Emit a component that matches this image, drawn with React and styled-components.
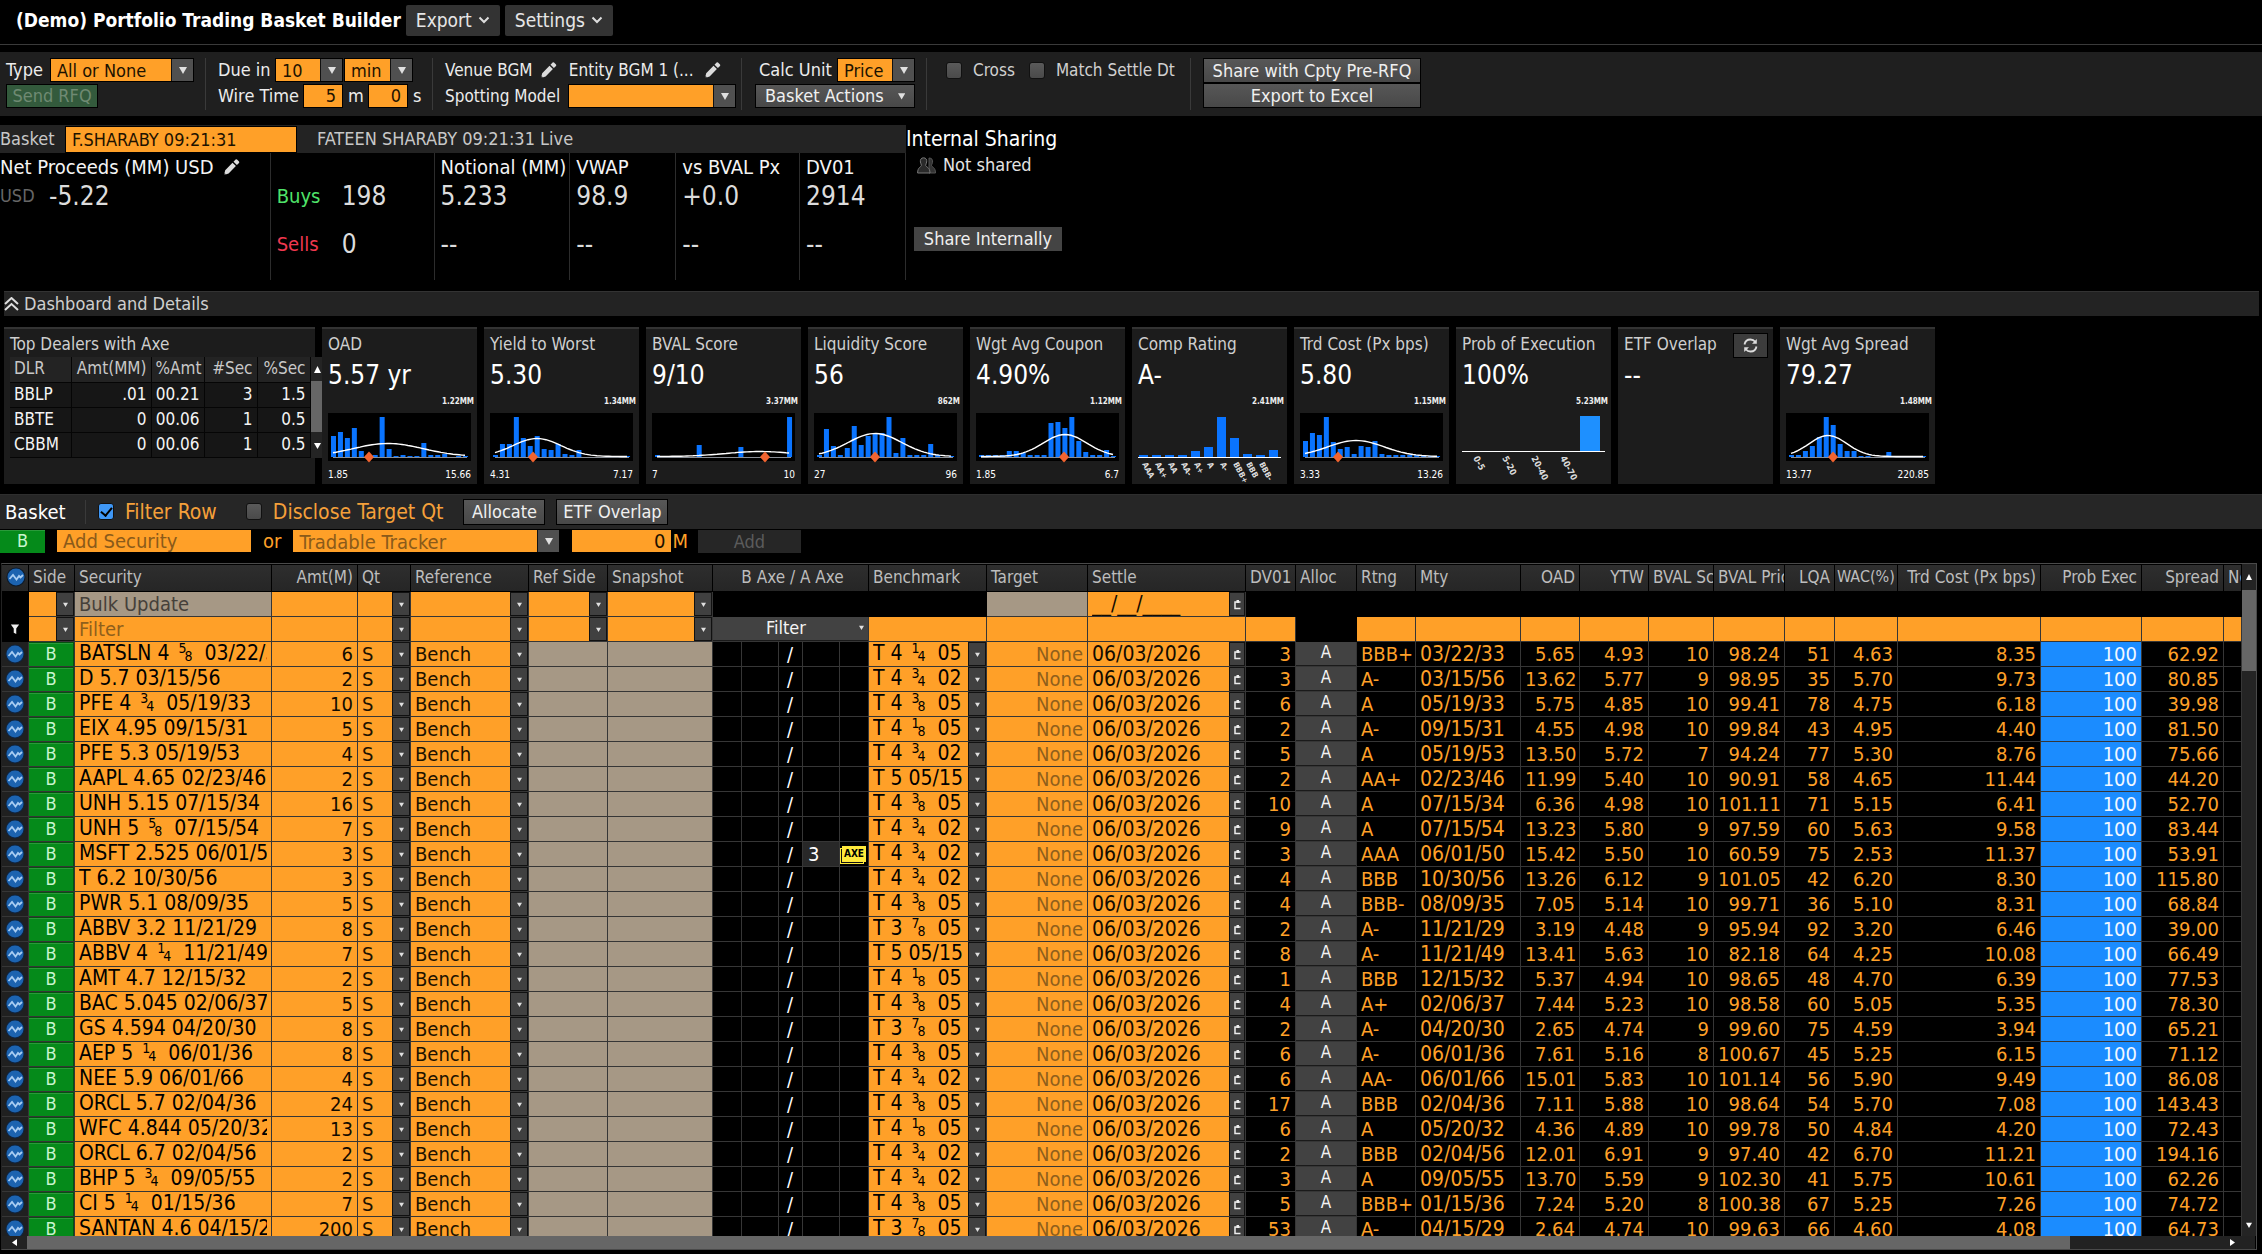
import React from "react";
import styled, { createGlobalStyle, css } from "styled-components";

const orange = "#ffa028";
const tan = "#a69885";
const line = "#363636";

const GlobalStyle = createGlobalStyle`
  * {
    box-sizing: border-box;
  }
  body {
    margin: 0;
    background: #000;
    color: #d8d8d8;
    font-family: "DejaVu Sans Condensed", "Noto Sans", sans-serif;
    font-size: 18px;
    line-height: 24px;
    white-space: nowrap;
    overflow: hidden;
  }
  button, input, select {
    font: inherit;
    margin: 0;
    padding: 0;
    border: none;
    border-radius: 0;
    outline: none;
  }
`;

const Page = styled.div`
  height: 100vh;
  display: flex;
  flex-direction: column;
`;

/* ---------- shared controls ---------- */

const GreyButton = styled.button`
  height: ${(p) => p.$h || 24}px;
  width: ${(p) => (p.$w ? p.$w + "px" : "auto")};
  padding: 0 9px;
  border: 1px solid #000;
  background: linear-gradient(#575757, #484848);
  color: #f0f0f0;
  display: flex;
  align-items: center;
  justify-content: center;
  gap: 14px;
  line-height: 20px;
`;

const SendButton = styled(GreyButton)`
  background: #335a3c;
  color: #6f8a73;
`;

const MenuButton = styled.button`
  height: 31px;
  padding: 0 10px;
  border-radius: 2px;
  background: #333;
  color: #e6e6e6;
  font-size: 19px;
  display: flex;
  align-items: center;
  gap: 6px;
`;

const OrangeInput = styled.input`
  width: ${(p) => p.$w}px;
  height: ${(p) => p.$h || 24}px;
  padding: 0 6px;
  background: ${orange};
  border: 1px solid #000;
  color: #1d1200;
  text-align: ${(p) => (p.$right ? "right" : "left")};
  font-size: ${(p) => p.$size || 18}px;
  &::placeholder {
    color: #8a5a1a;
    opacity: 1;
  }
`;

const DropBox = styled.span`
  display: flex;
  width: ${(p) => (p.$w ? p.$w + "px" : "100%")};
  height: ${(p) => p.$h || 24}px;
  border: ${(p) => (p.$plain ? "none" : "1px solid #000")};
  background: ${orange};

  select {
    flex: 1;
    min-width: 0;
    appearance: none;
    background: ${orange};
    color: ${(p) => (p.$hint ? "#8a5a1a" : "#1d1200")};
    padding-left: ${(p) => (p.$plain ? 4 : 6)}px;
    font-size: ${(p) => p.$size || 18}px;
  }
`;

const ArrowCell = styled.span`
  width: ${(p) => p.$w || 22}px;
  flex: none;
  display: flex;
  align-items: center;
  justify-content: center;
  background: ${(p) => (p.$w ? "#404040" : "#505050")};
  border: ${(p) => (p.$w ? "1px solid #111" : "none")};
  border-left: 1px solid #111;
`;

const Check = styled.input`
  appearance: none;
  width: 16px;
  height: 17px;
  flex: none;
  border: 1px solid #111;
  border-radius: 3px;
  background: linear-gradient(#5a5a5a, #4a4a4a);
  display: grid;
  place-items: center;

  &:checked {
    background: #3f97f5;
  }
  &:checked::after {
    content: "";
    width: 5px;
    height: 9px;
    margin-bottom: 3px;
    border: solid #000;
    border-width: 0 2px 2px 0;
    rotate: 40deg;
  }
`;

const Down = ({ size = 8, color = "#e0e0e0" }) => (
  <svg width={size} height={size} viewBox="0 0 8 8" aria-hidden="true">
    <path d="M0 1h8L4 8z" fill={color} />
  </svg>
);

const Chevron = () => (
  <svg width="12" height="8" viewBox="0 0 12 8" aria-hidden="true">
    <path d="M1.5 1.5 6 6l4.500-4.500" fill="none" stroke="#ddd" strokeWidth="2" />
  </svg>
);

const Pencil = () => (
  <svg width="17" height="17" viewBox="0 0 17 17" aria-hidden="true">
    <path d="M1 16l1.200-4.800L9.500 3.700l3.400 3.400-7.300 7.500zM10.500 2.700L12.600.6q.7-.6 1.400 0l2 2q.6.700 0 1.400l-2.100 2.100z" fill="#dcdcdc" />
    <path d="M1 16l.5-2 1.500 1.500z" fill="#111" />
  </svg>
);

const Drop = ({ value, label, w, h, size, plain, hint }) => (
  <DropBox $w={w} $h={h} $size={size} $plain={plain} $hint={hint}>
    <select aria-label={label} defaultValue={value}>
      <option value={value}>{value}</option>
    </select>
    <ArrowCell $w={plain ? 18 : undefined}>
      <Down size={plain ? 5 : 8} />
    </ArrowCell>
  </DropBox>
);

/* ---------- header and toolbar ---------- */

const TitleBar = styled.header`
  height: 45px;
  flex: none;
  display: flex;
  align-items: center;
  gap: 5px;
  padding: 0 16px 4px;
  border-bottom: 1px solid #3a3a3a;

  h1 {
    margin: 0;
    color: #fff;
    font-size: 19px;
    font-weight: 600;
  }
`;

const Toolbar = styled.div`
  margin-top: 7px;
  height: 64px;
  flex: none;
  display: flex;
  padding: 6px 6px;
  background: #1f1f1f;
  color: #ececec;
`;

const Group = styled.div`
  width: ${(p) => p.$w}px;
  padding-left: ${(p) => p.$pl || 0}px;
  display: flex;
  flex-direction: column;
  gap: ${(p) => (p.$last ? 0 : 2)}px;
  border-right: ${(p) => (p.$last ? "none" : "1px solid #3a3a3a")};
  font-size: ${(p) => (p.$small ? 17 : 18)}px;
`;

const Line = styled.div`
  display: flex;
  align-items: center;
  height: 24px;
  gap: ${(p) => p.$gap ?? 5}px;
`;

const Label = styled.label`
  width: ${(p) => (p.$w ? p.$w + "px" : "auto")};
`;

const CheckLabel = styled.label`
  display: flex;
  align-items: center;
  gap: ${(p) => p.$gap || 11}px;
  margin-left: ${(p) => p.$ml || 0}px;
  color: ${(p) => p.$color || "#d0d0d0"};
  font-size: ${(p) => p.$size || 17}px;
`;

/* ---------- summary ---------- */

const Summary = styled.section`
  margin-top: 9px;
  height: 155px;
  flex: none;
  display: flex;
`;

const SummaryLeft = styled.div`
  width: 906px;
  display: flex;
  flex-direction: column;
`;

const BasketBar = styled.div`
  height: 28px;
  display: flex;
  align-items: center;
  background: #232323;
  color: #c8c8c8;

  label {
    width: 65px;
  }
  span {
    margin-left: 20px;
  }
`;

const Stats = styled.div`
  flex: 1;
  display: flex;
`;

const Stat = styled.div`
  width: ${(p) => p.$w}px;
  padding-left: ${(p) => p.$pl ?? 6}px;
  border-right: 1px solid #2c2c2c;
  display: flex;
  flex-direction: column;
  white-space: nowrap;
`;

const StatTitle = styled.div`
  height: 28px;
  line-height: 26px;
  font-size: 20px;
  color: #f4f4f4;
  display: flex;
  align-items: center;
  gap: 9px;
`;

const StatValue = styled.div`
  height: ${(p) => (p.$tall ? 48 : 30)}px;
  line-height: 30px;
  font-size: 26px;
  color: #dcdcdc;
  display: flex;
`;

const Unit = styled.span`
  width: ${(p) => p.$w}px;
  font-size: ${(p) => p.$size || 20}px;
  color: ${(p) => p.$color};
`;

const Sharing = styled.div`
  padding-top: 1px;
  display: flex;
  flex-direction: column;
  align-items: flex-start;

  h2 {
    margin: 0;
    font-size: 21px;
    font-weight: 400;
    line-height: 27px;
    color: #fff;
  }
  p {
    margin: 0 0 50px 11px;
    display: flex;
    align-items: center;
    gap: 7px;
    color: #e4e4e4;
  }
  button {
    margin-left: 8px;
    border: none;
    background: #444;
  }
`;

/* ---------- dashboard ---------- */

const DashBar = styled.button`
  margin: 11px 3px 0 4px;
  height: 25px;
  flex: none;
  display: flex;
  align-items: center;
  gap: 5px;
  background: #232323;
  border-top: 1px solid #333;
  color: #cfcfcf;
  text-align: left;
`;

const Cards = styled.section`
  display: flex;
  gap: 7px;
  margin: 11px 0 10px 4px;
  flex: none;
`;

const Card = styled.article`
  position: relative;
  width: ${(p) => p.$w || 155}px;
  height: 157px;
  padding: 4px 6px 0;
  background: #1c1c1c;
  border-top: 2px solid #333;
  color: #cfcfcf;

  h3 {
    margin: 0;
    font-size: 17px;
    font-weight: 400;
    line-height: 22px;
  }
`;

const CardValue = styled.div`
  font-size: 26px;
  line-height: 40px;
  color: #fff;
`;

const Peak = styled.div`
  font-size: 8px;
  line-height: 14px;
  height: 18px;
  margin-right: -3px;
  text-align: right;
  font-weight: 700;
  color: #eee;
`;

const Range = styled.div`
  display: flex;
  justify-content: space-between;
  font-size: 10px;
  line-height: 14px;
  margin-top: 7px;
  color: #fff;
`;

const ChartSvg = styled.svg`
  display: block;
  overflow: visible;
  background: ${(p) => (p.$dark ? "#000" : "transparent")};
`;

const Refresh = styled(GreyButton)`
  position: absolute;
  top: 4px;
  right: 5px;
  width: 35px;
  height: 25px;
  padding: 0;
  background: #3c3c3c;
`;

const DealerWrap = styled.div`
  display: flex;
  margin-right: -13px;
  padding-top: 2px;
`;

const DealerTable = styled.table`
  width: 300px;
  table-layout: fixed;
  border-collapse: collapse;
  font-size: 17px;

  th, td {
    height: 25px;
    padding: 0 4px 2px;
    line-height: 22px;
    font-weight: 400;
    text-align: right;
    border: 1px solid #050505;
    border-left: none;
    background: #161616;
    color: #f4f4f4;
  }
  th {
    background: #232323;
    color: #c8c8c8;
    border-top: none;
  }
  th:first-child, td:first-child {
    text-align: left;
  }
`;

const Track = styled.div`
  width: 14px;
  flex: none;
  display: flex;
  flex-direction: column;
  justify-content: space-between;
  align-items: center;
  background: #242424;
`;

const Thumb = styled.div`
  width: 100%;
  height: ${(p) => p.$h}px;
  background: #666;
`;

const TrackTop = styled.div`
  width: 100%;
`;

const TrackArrow = styled.div`
  width: ${(p) => (p.$w ? p.$w + "px" : "auto")};
  height: ${(p) => p.$h}px;
  display: flex;
  align-items: center;
  justify-content: center;
`;

/* ---------- basket ---------- */

const BasketHead = styled.div`
  height: 35px;
  flex: none;
  display: flex;
  align-items: center;
  padding: 0 0 1px 5px;
  background: #262626;
  border-top: 1px solid #2e2e2e;

  h2 {
    margin: 0 12px 0 0;
    width: 68px;
    padding-right: 12px;
    border-right: 1px solid #3a3a3a;
    box-sizing: content-box;
    font-size: 20px;
    font-weight: 400;
    color: #fff;
  }
`;

const HeadButtons = styled.div`
  display: flex;
  gap: 11px;
  margin-left: 20px;
`;

const AddRow = styled.div`
  height: 24px;
  flex: none;
  display: flex;
  align-items: center;
  font-size: 20px;
  color: ${orange};
`;

const AddItem = styled.span`
  display: flex;
  margin: 0 11px;
`;

const SideBadge = styled.button`
  display: block;
  width: ${(p) => p.$w || 45}px;
  height: 23px;
  background: #058a1a;
  color: #c9f5cf;
  font-size: 18px;
  line-height: 20px;
  border-top: 1px solid #2a9a3a;
  padding-bottom: 2px;
`;

const AddDisabled = styled.button`
  width: 103px;
  height: 23px;
  margin-left: 10px;
  background: #262626;
  color: #5c5c5c;
  font-size: 18px;
`;

const GridArea = styled.section`
  flex: 1;
  min-height: 0;
  margin: 10px 5px 4px 1px;
  border: 1px solid #4a4a4a;
  border-left-color: #222;
  display: flex;
  flex-direction: column;
`;

const GridBody = styled.div`
  flex: 1;
  min-height: 0;
  display: flex;
`;

const GridClip = styled.div`
  flex: 1;
  min-width: 0;
  overflow: hidden;
`;

const Grid = styled.table`
  width: 100%;
  table-layout: fixed;
  border-collapse: separate;
  border-spacing: 0;
  font-size: 20px;
`;

const Th = styled.th`
  height: 28px;
  padding: 0 ${(p) => (p.$align === "right" ? 4 : 0)}px 2px ${(p) => (p.$tight ? 2 : 4)}px;
  overflow: hidden;
  background: linear-gradient(#2e2e2e, #262626);
  border: solid #000;
  border-width: 1px 1px 1px 0;
  color: #bdbdbd;
  font-size: ${(p) => (p.$tight ? 16 : 17)}px;
  font-weight: 400;
  line-height: 24px;
  text-align: ${(p) => p.$align || "left"};
  vertical-align: middle;

  svg {
    display: block;
  }
`;

const Td = styled.td`
  height: 25px;
  padding: 0 ${(p) => (p.$flush ? 0 : 4)}px;
  overflow: hidden;
  line-height: 24px;
  vertical-align: middle;
  border-right: 1px solid ${line};
  border-bottom: 1px solid ${line};
  text-align: ${(p) => p.$align || "left"};
  font-size: ${(p) => (p.$date ? 21 : 20)}px;
  color: ${orange};
  ${(p) =>
    p.$bg &&
    css`
      background: ${p.$bg};
      color: ${p.$fg || "#000"};
    `}
  ${(p) => p.$void && "border-color: #000;"}
`;

const Clip = styled.div`
  flex: 1;
  min-width: 0;
  overflow: hidden;
  height: 24px;
  line-height: 23px;
  font-size: 21px;
`;

const CellFlex = styled.div`
  display: flex;
  height: 24px;
  padding-left: ${(p) => p.$pl || 0}px;
`;

const CellInput = styled.input`
  display: block;
  width: 100%;
  min-width: 0;
  height: 24px;
  padding: 0 4px;
  background: transparent;
  color: ${(p) => p.$color || "#120b00"};
  text-align: ${(p) => p.$align || "left"};
  font-size: ${(p) => (p.$date ? 21 : 20)}px;

  &::placeholder {
    color: ${(p) => p.$hint || "#8f5f1c"};
    opacity: 1;
  }
`;

const CellButton = styled.button`
  width: ${(p) => p.$w || 18}px;
  height: 24px;
  flex: none;
  background: #404040;
  border: 1px solid #111;
  display: flex;
  align-items: center;
  justify-content: center;
`;

const AllocButton = styled.button`
  display: block;
  width: 100%;
  height: 24px;
  background: #424242;
  border-bottom: 1px solid #1a1a1a;
  color: #f4f4f4;
  font-size: 17px;
  line-height: 20px;
  padding-bottom: 3px;
`;

const FilterButton = styled(AllocButton)`
  display: flex;
  align-items: center;
  padding: 0 4px 2px 0;
  font-size: 18px;

  span {
    flex: 1;
  }
`;

const IconCell = styled.div`
  display: grid;
  place-items: center;
  height: 24px;
`;

const AxeGrid = styled.div`
  display: grid;
  grid-template-columns: 29fr 37fr 24fr 37fr 28fr;
  height: 24px;
  color: #fff;

  span {
    border-right: 1px solid ${line};
    padding-left: 5px;
  }
  span:nth-child(3) {
    padding-left: 8px;
  }
  span:last-child {
    border-right: none;
    padding: 0 1px;
    display: grid;
    place-items: center;
  }
  span.hit {
    background: #282828;
  }
`;

const AxeTag = styled.b`
  width: 24px;
  height: 16px;
  background: #ffe93b;
  box-shadow: -2px 2px 0 -1px #111, -2px 2px 0 0 #ffe93b;
  color: #000;
  font-size: 10px;
  line-height: 16px;
  text-align: center;
`;

const Frac = styled.span`
  margin: 0 6px 0 3px;

  sup, sub {
    font-size: 14px;
    line-height: 0;
  }
  sup {
    vertical-align: 7px;
  }
  sub {
    vertical-align: -1px;
    margin-left: -2px;
  }
`;

const HBar = styled.div`
  height: 13px;
  flex: none;
  display: flex;
  align-items: center;
  background: #222;
  margin-right: 1px;
`;

const HThumb = styled.div`
  flex: 2042;
  height: 13px;
  background: #666;
`;

const HRest = styled.div`
  flex: 165;
  display: flex;
  justify-content: flex-end;
  padding-right: 20px;
`;

/* ---------- data ---------- */

const stats = [
  { title: "Notional (MM)", value: "5.233", w: 136 },
  { title: "VWAP", value: "98.9", w: 106 },
  { title: "vs BVAL Px", value: "+0.0", w: 124 },
  { title: "DV01", value: "2914", w: 106 },
];

const dealers = [
  ["BBLP", ".01", "00.21", "3", "1.5"],
  ["BBTE", "0", "00.06", "1", "0.5"],
  ["CBBM", "0", "00.06", "1", "0.5"],
];

const cards = [
  { title: "OAD", value: "5.57 yr", peak: "1.22MM", min: "1.85", max: "15.66", bars: [21, 25, 19, 29, 6, 2, 2, 40, 8, 1, 2, 1, 1, 14, 2, 2, 3, 0, 1, 1], curve: [60, 13, 35], mark: 41 },
  { title: "Yield to Worst", value: "5.30", peak: "1.34MM", min: "4.31", max: "7.17", bars: [2, 13, 13, 40, 19, 11, 21, 8, 7, 13, 3, 2, 7, 0, 0, 0, 0, 0, 0, 1], curve: [47, 18, 24], mark: 43 },
  { title: "BVAL Score", value: "9/10", peak: "3.37MM", min: "7", max: "10", bars: [2, 0, 0, 0, 0, 0, 12, 0, 0, 0, 0, 0, 10, 0, 0, 0, 0, 0, 0, 40], curve: [108, 5, 34], mark: 113 },
  { title: "Liquidity Score", value: "56", peak: "862M", min: "27", max: "96", bars: [2, 28, 11, 2, 9, 31, 12, 21, 23, 24, 40, 4, 19, 2, 2, 2, 13, 2, 0, 1], curve: [61, 23, 27], mark: 61 },
  { title: "Wgt Avg Coupon", value: "4.90%", peak: "1.12MM", min: "1.85", max: "6.7", bars: [2, 2, 2, 2, 6, 6, 4, 2, 2, 2, 34, 35, 29, 40, 16, 5, 2, 2, 7, 1], curve: [89, 22, 22], mark: 88 },
  { title: "Comp Rating", value: "A-", peak: "2.41MM", kind: "rating" },
  { title: "Trd Cost (Px bps)", value: "5.80", peak: "1.15MM", min: "3.33", max: "13.26", bars: [16, 24, 22, 40, 15, 8, 10, 3, 11, 10, 16, 3, 2, 2, 2, 2, 2, 1, 1, 1], curve: [56, 16, 28], mark: 38 },
  { title: "Prob of Execution", value: "100%", peak: "5.23MM", kind: "prob" },
  { title: "ETF Overlap", value: "--", kind: "etf" },
  { title: "Wgt Avg Spread", value: "79.27", peak: "1.48MM", min: "13.77", max: "220.85", bars: [2, 2, 6, 11, 20, 40, 32, 13, 6, 6, 1, 1, 0, 0, 5, 0, 0, 0, 0, 1], curve: [42, 21, 19], mark: 47 },
];

const ratings = ["AAA", "AA+", "AA", "AA-", "A+", "A", "A-", "BBB+", "BBB", "BBB-"];
const ratingBars = [2, 2, 2, 2, 6, 10, 40, 19, 3, 2, 7];
const buckets = ["0-5", "5-20", "20-40", "40-70"];

const columns = [
  ["", 27], ["Side", 46], ["Security", 197], ["Amt(M)", 86, "right"], ["Qt", 53], ["Reference", 118],
  ["Ref Side", 79], ["Snapshot", 105], ["B Axe / A Axe", 156, "center"], ["Benchmark", 118], ["Target", 101],
  ["Settle", 158], ["DV01", 50, "right"], ["Alloc", 61], ["Rtng", 59], ["Mty", 105], ["OAD", 59, "right"],
  ["YTW", 69, "right"], ["BVAL Score", 65], ["BVAL Price", 71], ["LQA", 50, "right"], ["WAC(%)", 63],
  ["Trd Cost (Px bps)", 143, "right"], ["Prob Exec", 101, "right"], ["Spread", 82, "right"], ["Net", 18],
];

// security | amount | benchmark | dv01 | rating | maturity | oad | ytw | bval score | bval price | lqa | wac | trade cost | spread
const rows = `
BATSLN 4 5~8 03/22/33|6|T 4 1~4 05|3|BBB+|03/22/33|5.65|4.93|10|98.24|51|4.63|8.35|62.92
D 5.7 03/15/56|2|T 4 3~4 02|3|A-|03/15/56|13.62|5.77|9|98.95|35|5.70|9.73|80.85
PFE 4 3~4 05/19/33|10|T 4 3~8 05|6|A|05/19/33|5.75|4.85|10|99.41|78|4.75|6.18|39.98
EIX 4.95 09/15/31|5|T 4 1~8 05|2|A-|09/15/31|4.55|4.98|10|99.84|43|4.95|4.40|81.50
PFE 5.3 05/19/53|4|T 4 3~4 02|5|A|05/19/53|13.50|5.72|7|94.24|77|5.30|8.76|75.66
AAPL 4.65 02/23/46|2|T 5 05/15|2|AA+|02/23/46|11.99|5.40|10|90.91|58|4.65|11.44|44.20
UNH 5.15 07/15/34|16|T 4 3~8 05|10|A|07/15/34|6.36|4.98|10|101.11|71|5.15|6.41|52.70
UNH 5 5~8 07/15/54|7|T 4 3~4 02|9|A|07/15/54|13.23|5.80|9|97.59|60|5.63|9.58|83.44
MSFT 2.525 06/01/50|3|T 4 3~4 02|3|AAA|06/01/50|15.42|5.50|10|60.59|75|2.53|11.37|53.91
T 6.2 10/30/56|3|T 4 3~4 02|4|BBB|10/30/56|13.26|6.12|9|101.05|42|6.20|8.30|115.80
PWR 5.1 08/09/35|5|T 4 3~8 05|4|BBB-|08/09/35|7.05|5.14|10|99.71|36|5.10|8.31|68.84
ABBV 3.2 11/21/29|8|T 3 7~8 05|2|A-|11/21/29|3.19|4.48|9|95.94|92|3.20|6.46|39.00
ABBV 4 1~4 11/21/49|7|T 5 05/15|8|A-|11/21/49|13.41|5.63|10|82.18|64|4.25|10.08|66.49
AMT 4.7 12/15/32|2|T 4 1~8 05|1|BBB|12/15/32|5.37|4.94|10|98.65|48|4.70|6.39|77.53
BAC 5.045 02/06/37|5|T 4 3~8 05|4|A+|02/06/37|7.44|5.23|10|98.58|60|5.05|5.35|78.30
GS 4.594 04/20/30|8|T 3 7~8 05|2|A-|04/20/30|2.65|4.74|9|99.60|75|4.59|3.94|65.21
AEP 5 1~4 06/01/36|8|T 4 3~8 05|6|A-|06/01/36|7.61|5.16|8|100.67|45|5.25|6.15|71.12
NEE 5.9 06/01/66|4|T 4 3~4 02|6|AA-|06/01/66|15.01|5.83|10|101.14|56|5.90|9.49|86.08
ORCL 5.7 02/04/36|24|T 4 3~8 05|17|BBB|02/04/36|7.11|5.88|10|98.64|54|5.70|7.08|143.43
WFC 4.844 05/20/32|13|T 4 1~8 05|6|A|05/20/32|4.36|4.89|10|99.78|50|4.84|4.20|72.43
ORCL 6.7 02/04/56|2|T 4 3~4 02|2|BBB|02/04/56|12.01|6.91|9|97.40|42|6.70|11.21|194.16
BHP 5 3~4 09/05/55|2|T 4 3~4 02|3|A|09/05/55|13.70|5.59|9|102.30|41|5.75|10.61|62.26
CI 5 1~4 01/15/36|7|T 4 3~8 05|5|BBB+|01/15/36|7.24|5.20|8|100.38|67|5.25|7.26|74.72
SANTAN 4.6 04/15/29|200|T 3 7~8 05|53|A-|04/15/29|2.64|4.74|10|99.63|66|4.60|4.08|64.73
`.trim().split("\n").map((r) => r.split("|"));

/* ---------- pieces ---------- */

const WithFraction = ({ text }) => {
  const parts = text.split(/(\d~\d)/);
  return parts.map((part, i) => {
    if (!part.includes("~")) return part;
    const [top, bottom] = part.split("~");
    return <Frac key={i}><sup>{top}</sup><sub>{bottom}</sub></Frac>;
  });
};

const Wave = ({ dark }) => (
  <svg width="20" height="20" viewBox="0 0 20 20" aria-hidden="true">
    <circle cx="10" cy="10" r="9.500" fill={dark ? "#0d1a2a" : "#10233c"} />
    <circle cx="10" cy="10" r="8.500" fill="#1c63b0" />
    <path d="M3.500 12l3.500-4 3.500 4.500 2.500-3.500 1.500 1.500 2.500-2.500" fill="none" stroke="#a9cdf2" strokeWidth="1.800" />
  </svg>
);

const Funnel = () => (
  <svg width="10" height="12" viewBox="0 0 12 13" aria-hidden="true">
    <path d="M1 1h10L7.500 6v6.500l-3-1.500V6z" fill="#eee" />
  </svg>
);

const Calendar = () => (
  <svg width="7" height="11" viewBox="0 0 7 11" aria-hidden="true">
    <path d="M6.500 3H1v6.500h5.500" fill="none" stroke="#eee" strokeWidth="1.500" />
    <path d="M2.500 1H5v3H2.500z" fill="#eee" />
  </svg>
);

const People = () => (
  <svg width="19" height="17" viewBox="0 0 19 17" aria-hidden="true">
    <path d="M12 1c3 0 4 2 3.500 4.500-.2 1.500-1 2-1 3 0 1.500 4 1.500 4 7.500H12z" fill="#333" stroke="#555" />
    <path d="M6.500.8c2.600 0 3.500 2 3.200 4.200-.2 1.500-1 2.200-1 3.300C8.700 10 13 10 13 16H.6c0-6 3.800-6 3.800-7.700 0-1.100-.8-1.800-1-3.300C3.100 2.800 4 .8 6.500.8z" fill="#2a2a2a" stroke="#777" />
  </svg>
);

const Histogram = ({ bars, curve, mark }) => {
  const [mu, peak, sigma] = curve;
  const points = [];
  for (let x = 5; x <= 138; x += 3) {
    const y = 43.5 - peak * Math.exp(-((x - mu) ** 2) / (2 * sigma * sigma));
    points.push(`${x},${y.toFixed(1)}`);
  }
  return (
    <ChartSvg $dark width="143" height="48" viewBox="0 0 143 48" aria-hidden="true">
      {bars.map((h, i) => (
        <rect key={i} x={3 + i * 6.95} y={44 - h} width="5" height={h} fill="#0a74ff" />
      ))}
      <path d="M5 44.500h134" stroke="#8a8f96" strokeWidth="1" />
      <polyline points={points.join(" ")} fill="none" stroke="#fff" strokeWidth="1.400" />
      <path d={`M${mark} 38.500l5 5.500-5 5.500-5-5.500z`} fill="#f26430" />
    </ChartSvg>
  );
};

const RatingChart = () => (
  <ChartSvg width="143" height="70" viewBox="0 0 143 70" aria-hidden="true">
    {ratingBars.map((h, i) => (
      <rect key={i} x={1 + i * 13} y={44 - h} width="9" height={h} fill="#0a74ff" />
    ))}
    <path d="M0 44.500h143" stroke="#fff" />
    {ratings.map((t, i) => (
      <text key={t} transform={`translate(${4 + i * 13} 51) rotate(62)`} fontSize="8" fontWeight="700" fill="#ddd">{t}</text>
    ))}
  </ChartSvg>
);

const ProbChart = () => (
  <ChartSvg width="143" height="70" viewBox="0 0 143 70" aria-hidden="true">
    <rect x="118" y="3" width="20" height="35" fill="#1e90ff" />
    <path d="M0 38.500h143" stroke="#fff" />
    {buckets.map((t, i) => (
      <text key={t} transform={`translate(${11 + i * 29} 45) rotate(62)`} fontSize="9" fontWeight="700" fill="#ddd">{t}</text>
    ))}
  </ChartSvg>
);

const MetricCard = ({ card }) => (
  <Card>
    <h3>{card.title}</h3>
    {card.kind === "etf" && (
      <Refresh aria-label="Refresh">
        <svg width="15" height="15" viewBox="0 0 15 15" aria-hidden="true">
          <path d="M1.500 6.500C2 3.500 4.500 1.500 7.500 1.500c2 0 3.500.8 4.700 2.300M13.500 8.500c-.5 3-3 5-6 5-2 0-3.500-.8-4.700-2.300" fill="none" stroke="#ddd" strokeWidth="1.800" />
          <path d="M13.800 1v4.800H9zM1.200 14V9.200H6z" fill="#ddd" />
        </svg>
      </Refresh>
    )}
    <CardValue>{card.value}</CardValue>
    {card.peak && <Peak>{card.peak}</Peak>}
    {card.bars && <Histogram {...card} />}
    {card.bars && <Range><span>{card.min}</span><span>{card.max}</span></Range>}
    {card.kind === "rating" && <RatingChart />}
    {card.kind === "prob" && <ProbChart />}
  </Card>
);

const DealersCard = () => (
  <Card $w={311}>
    <h3>Top Dealers with Axe</h3>
    <DealerWrap>
      <DealerTable>
        <colgroup>
          <col width="61" /><col width="80" /><col width="53" /><col width="53" /><col width="53" />
        </colgroup>
        <thead>
          <tr>{["DLR", "Amt(MM)", "%Amt", "#Sec", "%Sec"].map((h) => <th key={h}>{h}</th>)}</tr>
        </thead>
        <tbody>
          {dealers.map((d) => (
            <tr key={d[0]}>{d.map((v, i) => <td key={i}>{v}</td>)}</tr>
          ))}
        </tbody>
      </DealerTable>
      <Track>
        <TrackArrow $h={24}><svg width="7" height="7" viewBox="0 0 8 8"><path d="M4 0l4 8H0z" fill="#fff" /></svg></TrackArrow>
        <Thumb $h={51} />
        <TrackArrow $h={25}><Down size={7} color="#fff" /></TrackArrow>
      </Track>
    </DealerWrap>
  </Card>
);

const DropTd = ({ label, value = "" }) => (
  <Td $flush $bg={orange}><Drop plain label={label} value={value} size={20} /></Td>
);

const BulkRow = () => (
  <tr>
    <Td $void />
    <DropTd label="Bulk side" />
    <Td $flush $bg={tan}><CellInput placeholder="Bulk Update" aria-label="Bulk update" $hint="#45403a" /></Td>
    <Td $flush $bg={orange}><CellInput aria-label="Bulk amount" /></Td>
    <DropTd label="Bulk quote type" />
    <DropTd label="Bulk reference" />
    <DropTd label="Bulk ref side" />
    <DropTd label="Bulk snapshot" />
    <Td $void /><Td $void />
    <Td $bg={tan} />
    <Td $flush $bg={orange}>
      <CellFlex>
        <CellInput $date defaultValue="__/__/____" aria-label="Bulk settle date" />
        <CellButton $w={16} aria-label="Pick date"><Calendar /></CellButton>
      </CellFlex>
    </Td>
    {columns.slice(12).map((c) => <Td key={c[0]} $void />)}
  </tr>
);

const FilterRow = () => (
  <tr>
    <Td $flush $void><IconCell><Funnel /></IconCell></Td>
    <DropTd label="Filter side" />
    <Td $flush $bg={orange}><CellInput placeholder="Filter" aria-label="Filter security" /></Td>
    <Td $flush $bg={orange}><CellInput aria-label="Filter amount" /></Td>
    <DropTd label="Filter quote type" />
    <DropTd label="Filter reference" />
    <DropTd label="Filter ref side" />
    <DropTd label="Filter snapshot" />
    <Td $flush><FilterButton><span>Filter</span><Down size={5} /></FilterButton></Td>
    {columns.slice(9).map((c) =>
      c[0] === "Alloc" ? (
        <Td key={c[0]} $void />
      ) : (
        <Td key={c[0]} $flush $bg={orange}><CellInput aria-label={`Filter ${c[0]}`} /></Td>
      )
    )}
  </tr>
);

const DataRow = ({ row }) => {
  const [security, amt, bench, dv01, rtng, mty, oad, ytw, score, price, lqa, wac, cost, spread] = row;
  const axed = security.startsWith("MSFT");
  return (
    <tr>
      <Td $flush $bg="#202020"><IconCell><Wave /></IconCell></Td>
      <Td $flush $bg="#04530f"><SideBadge $w={44}>B</SideBadge></Td>
      <Td $bg={orange}><Clip><WithFraction text={security} /></Clip></Td>
      <Td $flush $bg={orange}><CellInput $align="right" defaultValue={amt} aria-label={`${security} amount`} /></Td>
      <DropTd label="Quote type" value="S" />
      <DropTd label="Reference" value="Bench" />
      <Td $bg={tan} /><Td $bg={tan} />
      <Td $flush>
        <AxeGrid>
          <span /><span /><span>/</span>
          <span className={axed ? "hit" : ""}>{axed ? "3" : ""}</span>
          <span>{axed && <AxeTag>AXE</AxeTag>}</span>
        </AxeGrid>
      </Td>
      <Td $flush $bg={orange}>
        <CellFlex $pl={4}>
          <Clip><WithFraction text={bench} /></Clip>
          <CellButton aria-label="Benchmark"><Down size={5} /></CellButton>
        </CellFlex>
      </Td>
      <Td $flush $bg={orange}><CellInput $align="right" placeholder="None" aria-label="Target" /></Td>
      <Td $flush $bg={orange}>
        <CellFlex>
          <CellInput $date defaultValue="06/03/2026" aria-label="Settle date" />
          <CellButton $w={16} aria-label="Pick date"><Calendar /></CellButton>
        </CellFlex>
      </Td>
      <Td $align="right">{dv01}</Td>
      <Td $flush><AllocButton>A</AllocButton></Td>
      <Td>{rtng}</Td>
      <Td $date>{mty}</Td>
      <Td $align="right">{oad}</Td>
      <Td $align="right">{ytw}</Td>
      <Td $align="right">{score}</Td>
      <Td $align="right">{price}</Td>
      <Td $align="right">{lqa}</Td>
      <Td $align="right">{wac}</Td>
      <Td $align="right">{cost}</Td>
      <Td $align="right" $bg="#1b8cff" $fg="#f2f8ff">100</Td>
      <Td $align="right">{spread}</Td>
      <Td />
    </tr>
  );
};

const App = () => {
  return (
    <Page>
      <GlobalStyle />
      <TitleBar>
        <h1>(Demo) Portfolio Trading Basket Builder</h1>
        <MenuButton>Export <Chevron /></MenuButton>
        <MenuButton>Settings <Chevron /></MenuButton>
      </TitleBar>

      <Toolbar>
        <Group $w={200}>
          <Line $gap={0}><Label $w={44}>Type</Label><Drop label="Type" value="All or None" w={144} /></Line>
          <Line><SendButton $w={92} disabled>Send RFQ</SendButton></Line>
        </Group>
        <Group $w={227} $pl={12}>
          <Line $gap={1}>
            <Label $w={56}>Due in</Label>
            <Drop label="Due in" value="10" w={68} />
            <Drop label="Due unit" value="min" w={69} />
          </Line>
          <Line>
            <Label $w={80} htmlFor="wm">Wire Time</Label>
            <OrangeInput id="wm" $w={40} $right defaultValue="5" />
            <Label $w={15} htmlFor="wm">m</Label>
            <OrangeInput id="ws" $w={40} $right defaultValue="0" />
            <Label htmlFor="ws">s</Label>
          </Line>
        </Group>
        <Group $w={309} $pl={12} $small>
          <Line $gap={7}>
            <Label $w={88}>Venue BGM</Label><Pencil />
            <Label $w={133}>&nbsp;Entity BGM 1 (...</Label><Pencil />
          </Line>
          <Line $gap={0}><Label $w={123}>Spotting Model</Label><Drop label="Spotting Model" value="" w={168} /></Line>
        </Group>
        <Group $w={185} $pl={13}>
          <Line $gap={4}><span /><Label $w={74}>Calc Unit</Label><Drop label="Calc Unit" value="Price" w={78} /></Line>
          <Line><GreyButton $w={160}>Basket Actions <Down /></GreyButton></Line>
        </Group>
        <Group $w={264} $pl={19}>
          <Line $gap={14}>
            <CheckLabel><Check type="checkbox" />Cross</CheckLabel>
            <CheckLabel><Check type="checkbox" />Match Settle Dt</CheckLabel>
          </Line>
        </Group>
        <Group $w={240} $pl={12} $last>
          <GreyButton $w={218} $h={25}>Share with Cpty Pre-RFQ</GreyButton>
          <GreyButton $w={218} $h={25}>Export to Excel</GreyButton>
        </Group>
      </Toolbar>

      <Summary>
        <SummaryLeft>
          <BasketBar>
            <label htmlFor="basket">Basket</label>
            <OrangeInput id="basket" $w={232} $h={27} defaultValue="F.SHARABY 09:21:31" />
            <span>FATEEN SHARABY 09:21:31 Live</span>
          </BasketBar>
          <Stats>
            <Stat $w={271} $pl={0}>
              <StatTitle>Net Proceeds (MM) USD <Pencil /></StatTitle>
              <StatValue><Unit $w={49} $size={18} $color="#666">USD</Unit>-5.22</StatValue>
            </Stat>
            <Stat $w={164}>
              <StatTitle />
              <StatValue $tall><Unit $w={65} $color="#4fe36a">Buys</Unit>198</StatValue>
              <StatValue><Unit $w={65} $color="#f0384f">Sells</Unit>0</StatValue>
            </Stat>
            {stats.map((s) => (
              <Stat key={s.title} $w={s.w}>
                <StatTitle>{s.title}</StatTitle>
                <StatValue $tall>{s.value}</StatValue>
                <StatValue>--</StatValue>
              </Stat>
            ))}
          </Stats>
        </SummaryLeft>
        <Sharing>
          <h2>Internal Sharing</h2>
          <p><People />Not shared</p>
          <GreyButton $w={148}>Share Internally</GreyButton>
        </Sharing>
      </Summary>

      <DashBar>
        <svg width="15" height="15" viewBox="0 0 15 15" aria-hidden="true">
          <path d="M1 7l6.500-6L14 7M1 13l6.500-6 6.500 6" fill="none" stroke="#ddd" strokeWidth="2" />
        </svg>
        Dashboard and Details
      </DashBar>

      <Cards>
        <DealersCard />
        {cards.map((c) => <MetricCard key={c.title} card={c} />)}
      </Cards>

      <BasketHead>
        <h2>Basket</h2>
        <CheckLabel $size={21} $color="#f5a03a"><Check type="checkbox" defaultChecked />Filter Row</CheckLabel>
        <CheckLabel $size={21} $ml={29} $color="#f5a03a"><Check type="checkbox" />Disclose Target Qt</CheckLabel>
        <HeadButtons>
          <GreyButton $w={82} $h={26}>Allocate</GreyButton>
          <GreyButton $w={112} $h={26}>ETF Overlap</GreyButton>
        </HeadButtons>
      </BasketHead>
      <AddRow>
        <SideBadge>B</SideBadge>
        <AddItem><OrangeInput $w={196} $size={20} placeholder="Add Security" aria-label="Add Security" /></AddItem>
        or
        <AddItem><Drop hint w={268} size={20} label="Tracker" value="Tradable Tracker" /></AddItem>
        <OrangeInput id="qty" $w={101} $size={20} $right defaultValue="0" />
        <label htmlFor="qty">M</label>
        <AddDisabled disabled>Add</AddDisabled>
      </AddRow>

      <GridArea>
        <GridBody>
          <GridClip>
            <Grid>
              <colgroup>
                {columns.map((c, i) => <col key={i} width={c[1]} />)}
              </colgroup>
              <thead>
                <tr>
                  {columns.map(([name, , align], i) => (
                    <Th key={i} $align={align} $tight={name === "WAC(%)"}>{name || <Wave dark />}</Th>
                  ))}
                </tr>
              </thead>
              <tbody>
                <BulkRow />
                <FilterRow />
                {rows.map((r) => <DataRow key={r[0]} row={r} />)}
              </tbody>
            </Grid>
          </GridClip>
          <Track>
            <TrackTop>
              <TrackArrow $h={26}><svg width="6" height="6" viewBox="0 0 8 8"><path d="M4 0l4 8H0z" fill="#fff" /></svg></TrackArrow>
              <Thumb $h={81} />
            </TrackTop>
            <TrackArrow $h={23}><Down size={6} color="#fff" /></TrackArrow>
          </Track>
        </GridBody>
        <HBar>
          <TrackArrow $w={25} $h={13}><svg width="5" height="7" viewBox="0 0 5 7"><path d="M5 0v7L0 3.500z" fill="#fff" /></svg></TrackArrow>
          <HThumb />
          <HRest><svg width="5" height="7" viewBox="0 0 5 7"><path d="M0 0v7l5-3.500z" fill="#fff" /></svg></HRest>
        </HBar>
      </GridArea>
    </Page>
  );
};

export default App;
